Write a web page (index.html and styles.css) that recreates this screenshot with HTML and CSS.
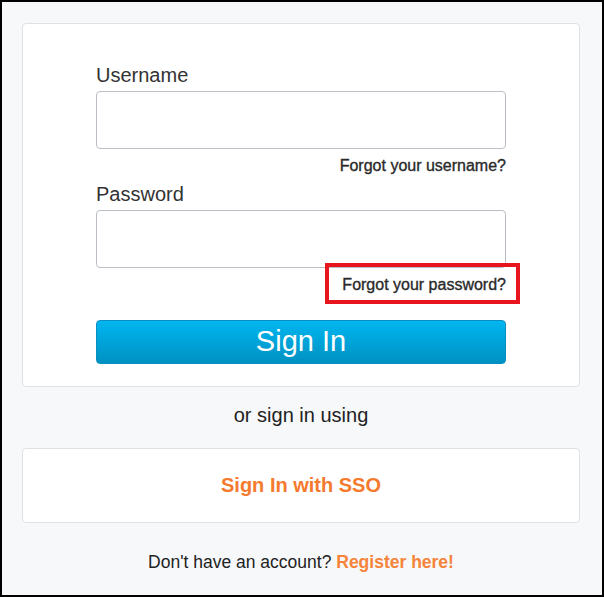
FILE: index.html
```html
<!DOCTYPE html>
<html>
<head>
<meta charset="utf-8">
<title>Sign In</title>
<link rel="stylesheet" href="styles.css">
</head>
<body>
<div class="page">
  <div class="card login">
    <form class="form">
      <label class="label" for="user">Username</label>
      <input class="field" id="user" type="text">
      <div class="forgot"><a href="#">Forgot your username?</a></div>
      <label class="label" for="pass">Password</label>
      <input class="field" id="pass" type="password">
      <div class="forgot"><a class="marked" href="#">Forgot your password?</a></div>
      <button class="btn" type="button">Sign In</button>
    </form>
  </div>
  <div class="or">or sign in using</div>
  <div class="card sso"><a href="#">Sign In with SSO</a></div>
  <div class="footer">Don't have an account? <a href="#">Register here!</a></div>
</div>
</body>
</html>
```

FILE: styles.css
```css
html, body {
  margin: 0;
  padding: 0;
}
body {
  box-sizing: border-box;
  height: 597px;
  border: 2px solid #000;
  background: #f7f8fa;
  font-family: "Liberation Sans", Arial, sans-serif;
  color: #333;
}
a {
  text-decoration: none;
}
.page {
  padding: 21px 22px 0 20px;
}
.card {
  background: #fff;
  border: 1px solid #dfe1e5;
  border-radius: 4px;
}
.login {
  padding: 39px 0 22px 73px;
}
.form {
  display: flex;
  flex-direction: column;
  width: 410px;
  margin: 0;
}
.label {
  font-size: 20px;
  line-height: 24px;
  color: #333;
}
.field {
  box-sizing: border-box;
  height: 58px;
  margin: 4px 0 0;
  border: 1px solid #b9bdc4;
  border-radius: 4px;
  background: #fff;
}
.forgot {
  margin-top: 7px;
  margin-bottom: 6px;
  text-align: right;
  font-size: 16px;
  line-height: 20px;
}
.forgot a {
  color: #2a2a2a;
  -webkit-text-stroke: 0.35px #2a2a2a;
}
.marked {
  position: relative;
}
.marked::after {
  content: "";
  position: absolute;
  left: -17px;
  right: -14px;
  top: -13px;
  bottom: -11px;
  border: 4px solid #e8141e;
}
.btn {
  display: flex;
  align-items: center;
  justify-content: center;
  height: 44px;
  margin-top: 19px;
  padding: 0 0 2px;
  border: 1px solid #0a90c0;
  border-radius: 4px;
  background: linear-gradient(#00b6f0, #0091c2);
  color: #fff;
  font-family: "Liberation Sans", Arial, sans-serif;
  font-size: 29px;
}
.or {
  margin-top: 16px;
  text-align: center;
  font-size: 20px;
  line-height: 24px;
  color: #222;
}
.sso {
  display: flex;
  align-items: center;
  justify-content: center;
  height: 73px;
  margin-top: 21px;
}
.sso a {
  color: #f47a2e;
  font-size: 20px;
  font-weight: bold;
}
.footer {
  margin-top: 28px;
  text-align: center;
  font-size: 17.5px;
  line-height: 22px;
  color: #222;
}
.footer a {
  color: #f5843a;
  font-weight: bold;
}
```
